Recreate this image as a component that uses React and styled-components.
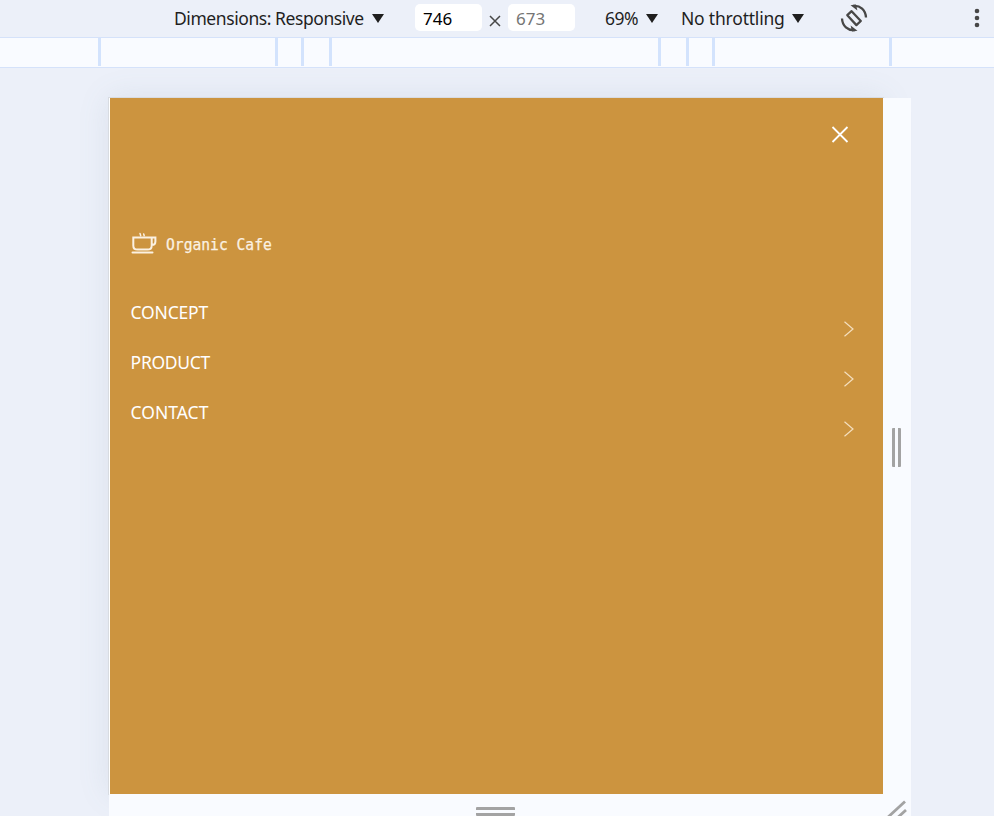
import React from "react";
import styled, { createGlobalStyle } from "styled-components";

const GlobalStyle = createGlobalStyle`
  * { box-sizing: border-box; }
  body { margin: 0; background: #ecf0f9; font-family: "Noto Sans", "Open Sans", sans-serif; }
`;

const Page = styled.div`
  width: 994px;
  height: 816px;
  overflow: hidden;
  display: flex;
  flex-direction: column;
  background: #ecf0f9;
`;

const Toolbar = styled.header`
  flex: none;
  height: 38px;
  display: flex;
  align-items: center;
  padding: 0 11px 2px 174px;
  border-bottom: 1px solid #d5e2fa;
  color: #1f1f1f;
  font-size: 17.5px;
`;

const Label = styled.span`
  width: ${(p) => p.$width}px;
  white-space: nowrap;
  letter-spacing: ${(p) => p.$spacing || 0}px;
`;

const Select = styled.div`
  display: flex;
  align-items: center;
  gap: ${(p) => p.$gap || 7}px;
  margin-left: ${(p) => p.$before || 0}px;
  margin-right: ${(p) => p.$after}px;
  svg { display: block; margin-top: 2px; }
`;

const SizeField = styled.input`
  width: 67px;
  height: 27px;
  margin: -1px 0 0;
  padding: 2px 8px 0;
  border: 0;
  border-radius: 5px;
  background: #fff;
  color: ${(p) => (p.$muted ? "#757575" : "#000")};
  font: 17px "Noto Sans", sans-serif;
  outline: none;
`;

const Times = styled.span`
  width: 26px;
  display: flex;
  justify-content: center;
  padding-top: 7px;
`;

const IconButton = styled.button`
  display: flex;
  padding: 0;
  border: 0;
  background: none;
  color: #474747;
  margin-left: ${(p) => (p.$end ? "auto" : 0)};
`;

const Ruler = styled.div`
  flex: none;
  height: 30px;
  display: flex;
  padding-bottom: 1px;
  background: #f9fbff;
  border-bottom: 1px solid #d5e2fa;
`;

const Segment = styled.div`
  width: ${(p) => p.$width}px;
  border-left: ${(p) => (p.$first ? 0 : 3)}px solid #d3e3fd;
`;

const Stage = styled.main`
  flex: 1;
  min-height: 0;
  overflow: hidden;
  padding: 30px 0 0 109px;
`;

const Device = styled.div`
  width: 802px;
  display: grid;
  grid-template-columns: 774px 28px;
  grid-template-rows: 696px 22px;
`;

const Screen = styled.section`
  border-left: 1px solid #fff;
  background: #cc943f;
  background-clip: padding-box;
  box-shadow: 0 0 0 1px #d8dce2, 0 0 30px rgba(100, 120, 145, 0.13);
  color: #fff;
`;

const Handle = styled.div`
  position: relative;
  background: #f9fbff;
  display: flex;
  justify-content: ${(p) => (p.$side ? "flex-start" : "center")};
  align-items: ${(p) => (p.$side ? "center" : "flex-start")};
  padding: ${(p) => (p.$side ? "2px 0 0 9px" : "13px 1px 0 0")};
  svg { display: block; }
`;

const Grip = styled.span`
  width: ${(p) => (p.$side ? 9 : 39)}px;
  height: ${(p) => (p.$side ? 39 : 9)}px;
  border: solid #a3a3a3;
  border-width: ${(p) => (p.$side ? "0 3px" : "3px 0")};
  border-radius: 1px;
`;

const Corner = styled(Handle)`
  padding: 5px 0 0 2px;
  justify-content: flex-start;
`;

const CloseRow = styled.div`
  display: flex;
  justify-content: flex-end;
  padding: 28px 34px 0 0;
  height: 134px;
`;

const Brand = styled.div`
  height: 26px;
  padding-left: 21px;
  display: flex;
  align-items: flex-start;
  gap: 8px;
  color: #fbf1e2;
`;

const BrandName = styled.span`
  padding-top: 4px;
  font: 15.5px/18px "DejaVu Sans Mono", monospace;
  white-space: pre;
  transform: scaleX(0.945);
  transform-origin: left;
  -webkit-text-stroke: 0.25px currentColor;
`;

const Menu = styled.nav`
  padding: 42px 28px 0 20.6px;
`;

const MenuItem = styled.a`
  height: 50px;
  display: flex;
  justify-content: space-between;
  font-size: 17.5px;
  line-height: 25px;
  letter-spacing: ${(p) => p.$spacing}px;
  svg { margin-top: 21px; }
`;

const ZoomLabel = styled(Label)`
  letter-spacing: -0.5px;
`;

const Arrow = () => (
  <svg width="12" height="9" viewBox="0 0 12 9"><path d="M0 0h12L6 9z" fill="#1f1f1f" /></svg>
);

const Cup = () => (
  <svg width="27" height="24" viewBox="0 0 27 24" fill="none" stroke="currentColor" strokeWidth="2" strokeLinecap="round">
    <path d="M2.3 5.6h18.4v7.8c0 2.8-1.5 4.2-4.2 4.2h-10c-2.7 0-4.2-1.4-4.2-4.2zM20.7 5.6h3.7v3.8c0 2.4-1.4 3.5-3.7 3.5M1.5 20.4h20" />
    <path d="M9 1.4l.7 2.3M12.7 2l.5 1.7" strokeWidth="1.5" />
  </svg>
);

const Rotate = () => (
  <svg width="28" height="28" viewBox="0 0 28 28" fill="none" stroke="currentColor" strokeWidth="2.3" strokeLinejoin="round">
    <path d="M11.6 7.2l9.2 9.8-4.4 4.1L7.3 11.2z" />
    <path d="M13 1.9C20.3 1 25.6 6 26 13.5M15 26.1C7.7 27 2.4 22 2 14.5" />
    <path d="M10.5 1.2l5.5-.7 1.4 5.9zM17.5 26.8l-5.5.7-1.4-5.9z" fill="currentColor" stroke="none" />
  </svg>
);

const segments = [98, 177, 26, 28, 329, 28, 26, 177, 105];
const links = [["CONCEPT", -0.2], ["PRODUCT", -0.3], ["CONTACT", 0]];

export default function App() {
  return (
    <Page>
      <GlobalStyle />
      <Toolbar>
        <Select $after={31} $gap={8}><Label $width={190} $spacing={-0.43}>Dimensions: Responsive</Label><Arrow /></Select>
        <SizeField aria-label="Width" defaultValue="746" />
        <Times>
          <svg width="12" height="12" viewBox="0 0 12 12" stroke="#474747" strokeWidth="1.5"><path d="M1 1l10 10M11 1L1 11" /></svg>
        </Times>
        <SizeField aria-label="Height" defaultValue="673" $muted />
        <Select $before={30} $after={23}><ZoomLabel $width={34}>69%</ZoomLabel><Arrow /></Select>
        <Select $after={36} $gap={8}><Label $width={103} $spacing={-0.2}>No throttling</Label><Arrow /></Select>
        <IconButton aria-label="Rotate"><Rotate /></IconButton>
        <IconButton aria-label="More options" $end>
          <svg width="12" height="20" viewBox="0 0 12 20" fill="currentColor"><circle cx="6" cy="3" r="2.3" /><circle cx="6" cy="10" r="2.3" /><circle cx="6" cy="17" r="2.3" /></svg>
        </IconButton>
      </Toolbar>
      <Ruler>{segments.map((w, i) => <Segment key={i} $width={w} $first={i === 0} />)}</Ruler>
      <Stage>
        <Device>
          <Screen>
            <CloseRow>
              <svg width="18" height="18" viewBox="0 0 18 18" stroke="#fff" strokeWidth="1.8"><path d="M1.5 1l15 15M16.5 1l-15 15" /></svg>
            </CloseRow>
            <Brand><Cup /><BrandName>Organic Cafe</BrandName></Brand>
            <Menu>
              {links.map(([name, spacing]) => (
                <MenuItem key={name} $spacing={spacing}>
                  {name}
                  <svg width="12" height="16" viewBox="0 0 12 16" fill="none" stroke="#f4dfbf" strokeWidth="1.2"><path d="M1.5 .8L10 8 1.5 15.2" /></svg>
                </MenuItem>
              ))}
            </Menu>
          </Screen>
          <Handle $side><Grip $side /></Handle>
          <Handle><Grip /></Handle>
          <Corner>
            <svg width="24" height="20" viewBox="0 0 24 20" stroke="#a3a3a3" strokeWidth="2.8"><path d="M1 20L20 2.5M10 21l11-10" /></svg>
          </Corner>
        </Device>
      </Stage>
    </Page>
  );
}
